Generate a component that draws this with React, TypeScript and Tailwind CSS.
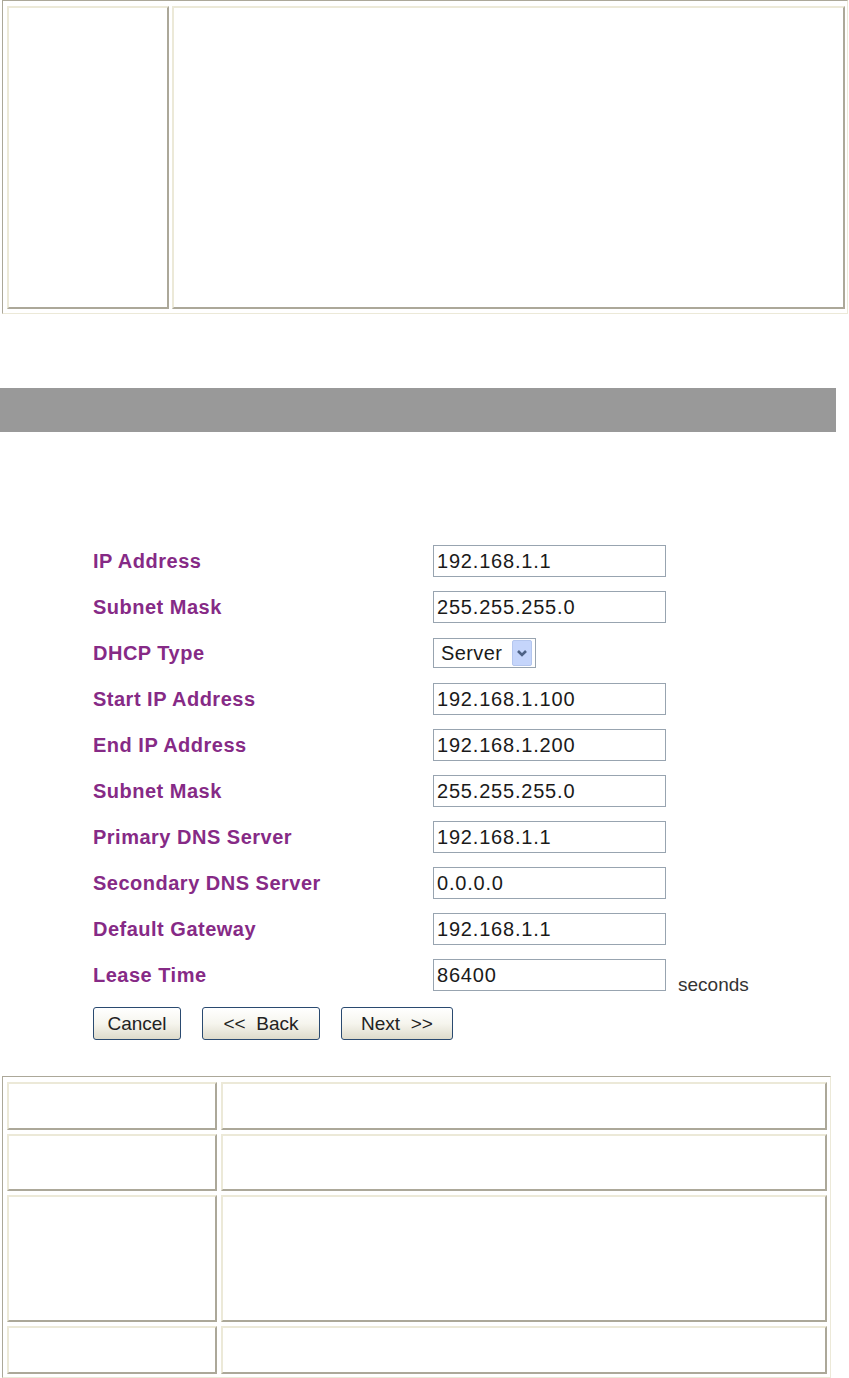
import React from "react";

const rows: [string, string | null][] = [
  ["IP Address", "192.168.1.1"],
  ["Subnet Mask", "255.255.255.0"],
  ["DHCP Type", null],
  ["Start IP Address", "192.168.1.100"],
  ["End IP Address", "192.168.1.200"],
  ["Subnet Mask", "255.255.255.0"],
  ["Primary DNS Server", "192.168.1.1"],
  ["Secondary DNS Server", "0.0.0.0"],
  ["Default Gateway", "192.168.1.1"],
  ["Lease Time", "86400"],
];

function Cell({ className = "" }: { className?: string }) {
  return (
    <div
      className={
        "border-2 border-t-[#ece9d8] border-l-[#ece9d8] border-b-[#aca899] border-r-[#aca899] bg-white " +
        className
      }
    />
  );
}

function Btn({ label, w }: { label: string; w: string }) {
  return (
    <button
      type="button"
      className={
        "h-[33px] rounded-[3px] border border-[#2a4a70] bg-linear-to-b from-white via-[#f6f5ee] to-[#dedbcb] text-[19px] leading-none text-[#222222] whitespace-pre " +
        w
      }
    >
      {label}
    </button>
  );
}

export default function App() {
  return (
    <div className="w-[849px] min-h-[1378px] bg-white font-['Liberation_Sans',Arial,sans-serif] overflow-hidden">
      {/* top table */}
      <div className="ml-[2px] flex h-[314px] w-[846px] gap-[3px] border border-t-[#aca899] border-l-[#aca899] border-b-[#ece9d8] border-r-[#ece9d8] pl-[4px] pt-[5px] pr-[2px] pb-[4px]">
        <Cell className="w-[162px]" />
        <Cell className="flex-1" />
      </div>

      {/* gray bar */}
      <div className="mt-[74px] h-[44px] w-[836px] bg-[#999999]" />

      {/* form */}
      <div className="mt-[113px] pl-[93px]">
        <div className="flex flex-col gap-[14px]">
          {rows.map(([label, value], i) => (
            <div key={i} className="flex h-[32px] items-center">
              <div className="w-[340px] text-[20px] font-bold tracking-[0.5px] text-[#862a86]">
                {label}
              </div>
              {value === null ? (
                <div className="flex h-[30px] w-[103px] items-center justify-between border border-[#98a4b0] pl-[7px] pr-[3px] text-[20px] tracking-[0.4px] text-[#1a1a1a]">
                  <span>Server</span>
                  <span className="flex h-[26px] w-[20px] items-center justify-center rounded-[2px] border border-[#b4c6ee] bg-[#c5d5fb]">
                    <svg width="14" height="12" viewBox="0 0 14 12">
                      <path d="M3 4 L7 8 L11 4" fill="none" stroke="#4d6185" strokeWidth="2.6" />
                    </svg>
                  </span>
                </div>
              ) : (
                <>
                  <input
                    readOnly
                    defaultValue={value}
                    className="h-[32px] w-[233px] border border-[#98a4b0] bg-white pl-[3px] text-[20px] tracking-[0.8px] text-[#1a1a1a] outline-none"
                  />
                  {label === "Lease Time" && (
                    <span className="ml-[12px] -mb-[5px] self-end text-[19px] leading-[23px] text-[#333333]">
                      seconds
                    </span>
                  )}
                </>
              )}
            </div>
          ))}
        </div>
        <div className="mt-[16px] flex gap-[21px]">
          <Btn label="Cancel" w="w-[88px]" />
          <Btn label="<<  Back" w="w-[118px]" />
          <Btn label="Next  >>" w="w-[112px]" />
        </div>
      </div>

      {/* bottom table */}
      <div className="mt-[36px] ml-[2px] grid h-[302px] w-[829px] grid-cols-[210px_606px] grid-rows-[48px_57px_127px_48px] gap-x-[4px] gap-y-[4px] border border-t-[#aca899] border-l-[#aca899] border-b-[#ece9d8] border-r-[#ece9d8] pl-[4px] pt-[5px] pr-[3px] pb-[3px]">
        <Cell />
        <Cell />
        <Cell />
        <Cell />
        <Cell />
        <Cell />
        <Cell />
        <Cell />
      </div>
    </div>
  );
}
